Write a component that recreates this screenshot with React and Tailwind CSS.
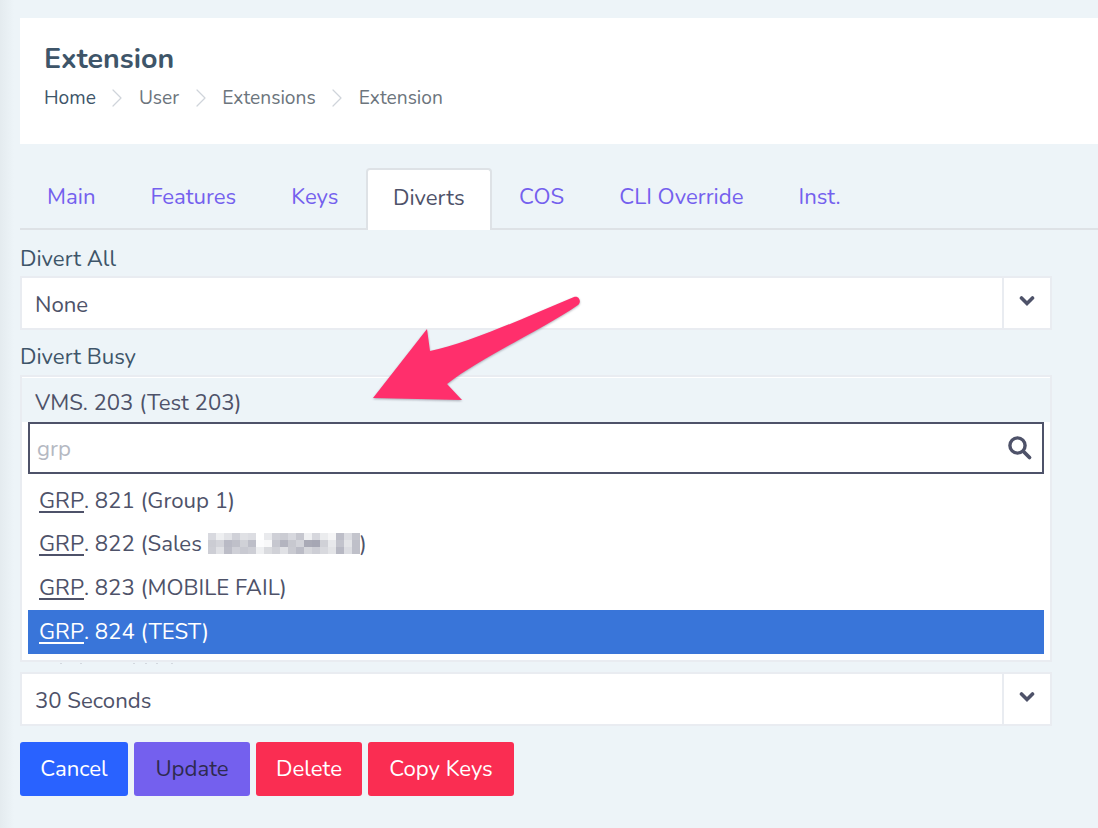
import React from 'react';
import { ChevronRight } from 'lucide-react';

const tabs = ['Main', 'Features', 'Keys', 'Diverts', 'COS', 'CLI Override', 'Inst.'];
const crumbs = ['Home', 'User', 'Extensions', 'Extension'];
const options = [
  { code: '821', name: '(Group 1)', height: 'h-[42px]' },
  { code: '822', name: '(Sales', blurred: true, height: 'h-[44px] pb-[1px]' },
  { code: '823', name: '(MOBILE FAIL)', height: 'h-[44px] pb-[1px]' },
  { code: '824', name: '(TEST)', active: true, height: 'h-[44px] pb-[1px]' },
];

// Solid chevron as in the select addon
function Chevron() {
  return (
    <svg width="16" height="12" viewBox="0 0 16 12" className="mb-[4px] text-[#4e5269]">
      <path d="M2.5 3 L8 8.5 L13.5 3" fill="none" stroke="currentColor" strokeWidth="3.6" strokeLinecap="round" strokeLinejoin="miter" />
    </svg>
  );
}

function SearchIcon() {
  return (
    <svg width="26" height="26" viewBox="0 0 26 26" className="text-[#4e5269]">
      <circle cx="10.5" cy="10.5" r="7.6" fill="none" stroke="currentColor" strokeWidth="3.4" />
      <path d="M16.5 16.5 L22.5 22.5" fill="none" stroke="currentColor" strokeWidth="3.8" strokeLinecap="round" />
    </svg>
  );
}

function Select({ value }) {
  return (
    <div className="flex h-[54px] w-[1032px] items-stretch border-2 border-[#e9ecf1] bg-white">
      <div className="flex flex-1 items-center pt-[3px] pl-[13px] text-[#4e5269]">{value}</div>
      <div className="flex w-[48px] items-center justify-center border-l-2 border-[#e9ecf1]"><Chevron /></div>
    </div>
  );
}

// Pixelated patch hiding part of a name
const mosaic = [
  '#d8d9df', '#eeeff1', '#e2e3e7', '#d0d1d8', '#e0e1e5', '#dcdde2', '#ffffff', '#e9eaed', '#cfd0d7', '#cbccd3', '#d7d8de', '#c6c7cf', '#eff0f2', '#d6d7dd', '#ebecee', '#f5f5f6', '#bdbec8', '#dcdde2', '#c4c5cd',
  '#cbccd3', '#d3d4da', '#b9bac5', '#bfc0c9', '#d0d1d7', '#bdbec8', '#fcfcfd', '#f8f8f9', '#c6c7cf', '#b3b4bf', '#c7c8cf', '#d2d3d9', '#a9aab6', '#a6a7b4', '#d0d1d7', '#e8e9ec', '#c2c3cc', '#e3e4e7', '#bfc0c9',
  '#cdced5', '#e0e1e5', '#bcbdc7', '#cfd0d7', '#c8c9d1', '#cdced5', '#eeeff1', '#dadbdf', '#d0d1d7', '#e0e1e5', '#c9cad1', '#bbbcc6', '#d6d7dc', '#cdced5', '#d8d9de', '#e3e4e7', '#b7b8c3', '#dcdde2', '#bfc0c9',
];

export default function App() {
  return (
    <div className="relative min-h-[828px] overflow-hidden bg-[#edf4f8] pt-[18px] pl-[20px] font-['Nunito','Lato','Noto_Sans',sans-serif] text-[22.2px] leading-[28px] text-[#4e5269]">
      <div className="absolute inset-y-0 left-0 w-[14px] bg-gradient-to-r from-[#e4ebef] to-[#edf4f8]" />

      <header className="relative h-[126px] bg-white pt-[25px] pl-[24px]">
        <h1 className="text-[28.6px] leading-[32px] font-bold text-[#3e5569]">Extension</h1>
        <nav className="mt-[7px] flex items-center text-[19.2px] leading-[26px] text-[#6c757d]">
          {crumbs.map((c, i) => (
            <React.Fragment key={c}>
              {i > 0 && <ChevronRight size={32} strokeWidth={0.9} className="mx-[5.5px] text-[#cfd4da]" />}
              <span className={i === 0 ? 'text-[#3e5569]' : ''}>{c}</span>
            </React.Fragment>
          ))}
        </nav>
      </header>

      <div className="relative mt-[24px] flex h-[62px] items-stretch border-b-2 border-[#dee2e6]">
        {tabs.map((t) => (
          t === 'Diverts' ? (
            <div key={t} className="-mb-[2px] flex items-center rounded-t-[4px] border-2 border-b-0 border-[#dee2e6] bg-white px-[25px] pb-[4px] text-[#4e5269]">{t}</div>
          ) : (
            <div key={t} className="flex items-center px-[27.5px] pb-[2px] text-[#7460ee] first:pl-[27px]">{t}</div>
          )
        ))}
      </div>

      <div className="relative">
        <label className="block pt-[15px] pb-[3px] leading-[28px] text-[#3e5569]">Divert All</label>
        <Select value="None" />

        <label className="block pt-[13px] pb-[4px] leading-[28px] text-[#3e5569]">Divert Busy</label>
        <div className="w-[1032px] border-2 border-[#e9ecf1] bg-white pb-[6px]">
          <div className="mt-[1px] flex h-[44px] items-center bg-[#edf4f8] pt-[5px] pl-[13px] text-[#4e5269]">VMS. 203 (Test 203)</div>
          <div className="mx-[6px] flex h-[52px] items-center justify-between border-2 border-[#4e5269] bg-white pr-[9px] pl-[7px]">
            <span className="pt-[1px] text-[#b4b8c2]">grp</span>
            <SearchIcon />
          </div>
          <ul className="mx-[6px] mt-[6px]">
            {options.map((o) => (
              <li key={o.code} className={`flex items-center pl-[11px] ${o.height} ${o.active ? 'bg-[#3975d9] text-white' : 'text-[#4e5269]'}`}>
                <span className="underline underline-offset-[3px]">GRP</span>
                <span className="whitespace-pre">. {o.code} {o.name}</span>
                {o.blurred && (
                  <>
                    <span className="ml-[6px] grid h-[21px] w-[152px] grid-cols-[repeat(19,8px)] grid-rows-3 overflow-hidden">
                      {mosaic.map((c, i) => <span key={i} style={{ backgroundColor: c }} />)}
                    </span>
                    <span>)</span>
                  </>
                )}
              </li>
            ))}
          </ul>
        </div>

        {/* specks of the label hidden behind the open list */}
        <svg width="180" height="10" viewBox="0 0 180 10" className="block text-[#d3d8df]">
          {[40, 60, 113, 125, 136, 151].map((x) => (
            <rect key={x} x={x} y="1" width="2" height="1" fill="currentColor" />
          ))}
        </svg>
        <Select value="30 Seconds" />

        <div className="mt-[16px] flex gap-[6px]">
          <button className="h-[54px] w-[108px] rounded-[3px] bg-[#2962ff] text-white">Cancel</button>
          <button className="h-[54px] w-[116px] rounded-[3px] bg-[#7460ee] text-[#2e2a4e]">Update</button>
          <button className="h-[54px] w-[106px] rounded-[3px] bg-[#fa2d52] text-white">Delete</button>
          <button className="h-[54px] w-[146px] rounded-[3px] bg-[#fa2d52] text-white">Copy Keys</button>
        </div>
      </div>

      {/* annotation arrow laid over the form */}
      <svg className="absolute top-0 left-0" width="1098" height="828" viewBox="0 0 1098 828" fill="none">
        <path
          d="M373 398 L427 329 L430 351 C465 344 520 320 574 297 C579 295 582 302 578 305 C545 328 480 358 447 384 L462 400 Z"
          fill="#ff2f6c"
          className="drop-shadow-[0_1px_1px_rgba(60,60,80,0.4)]"
        />
      </svg>
    </div>
  );
}
